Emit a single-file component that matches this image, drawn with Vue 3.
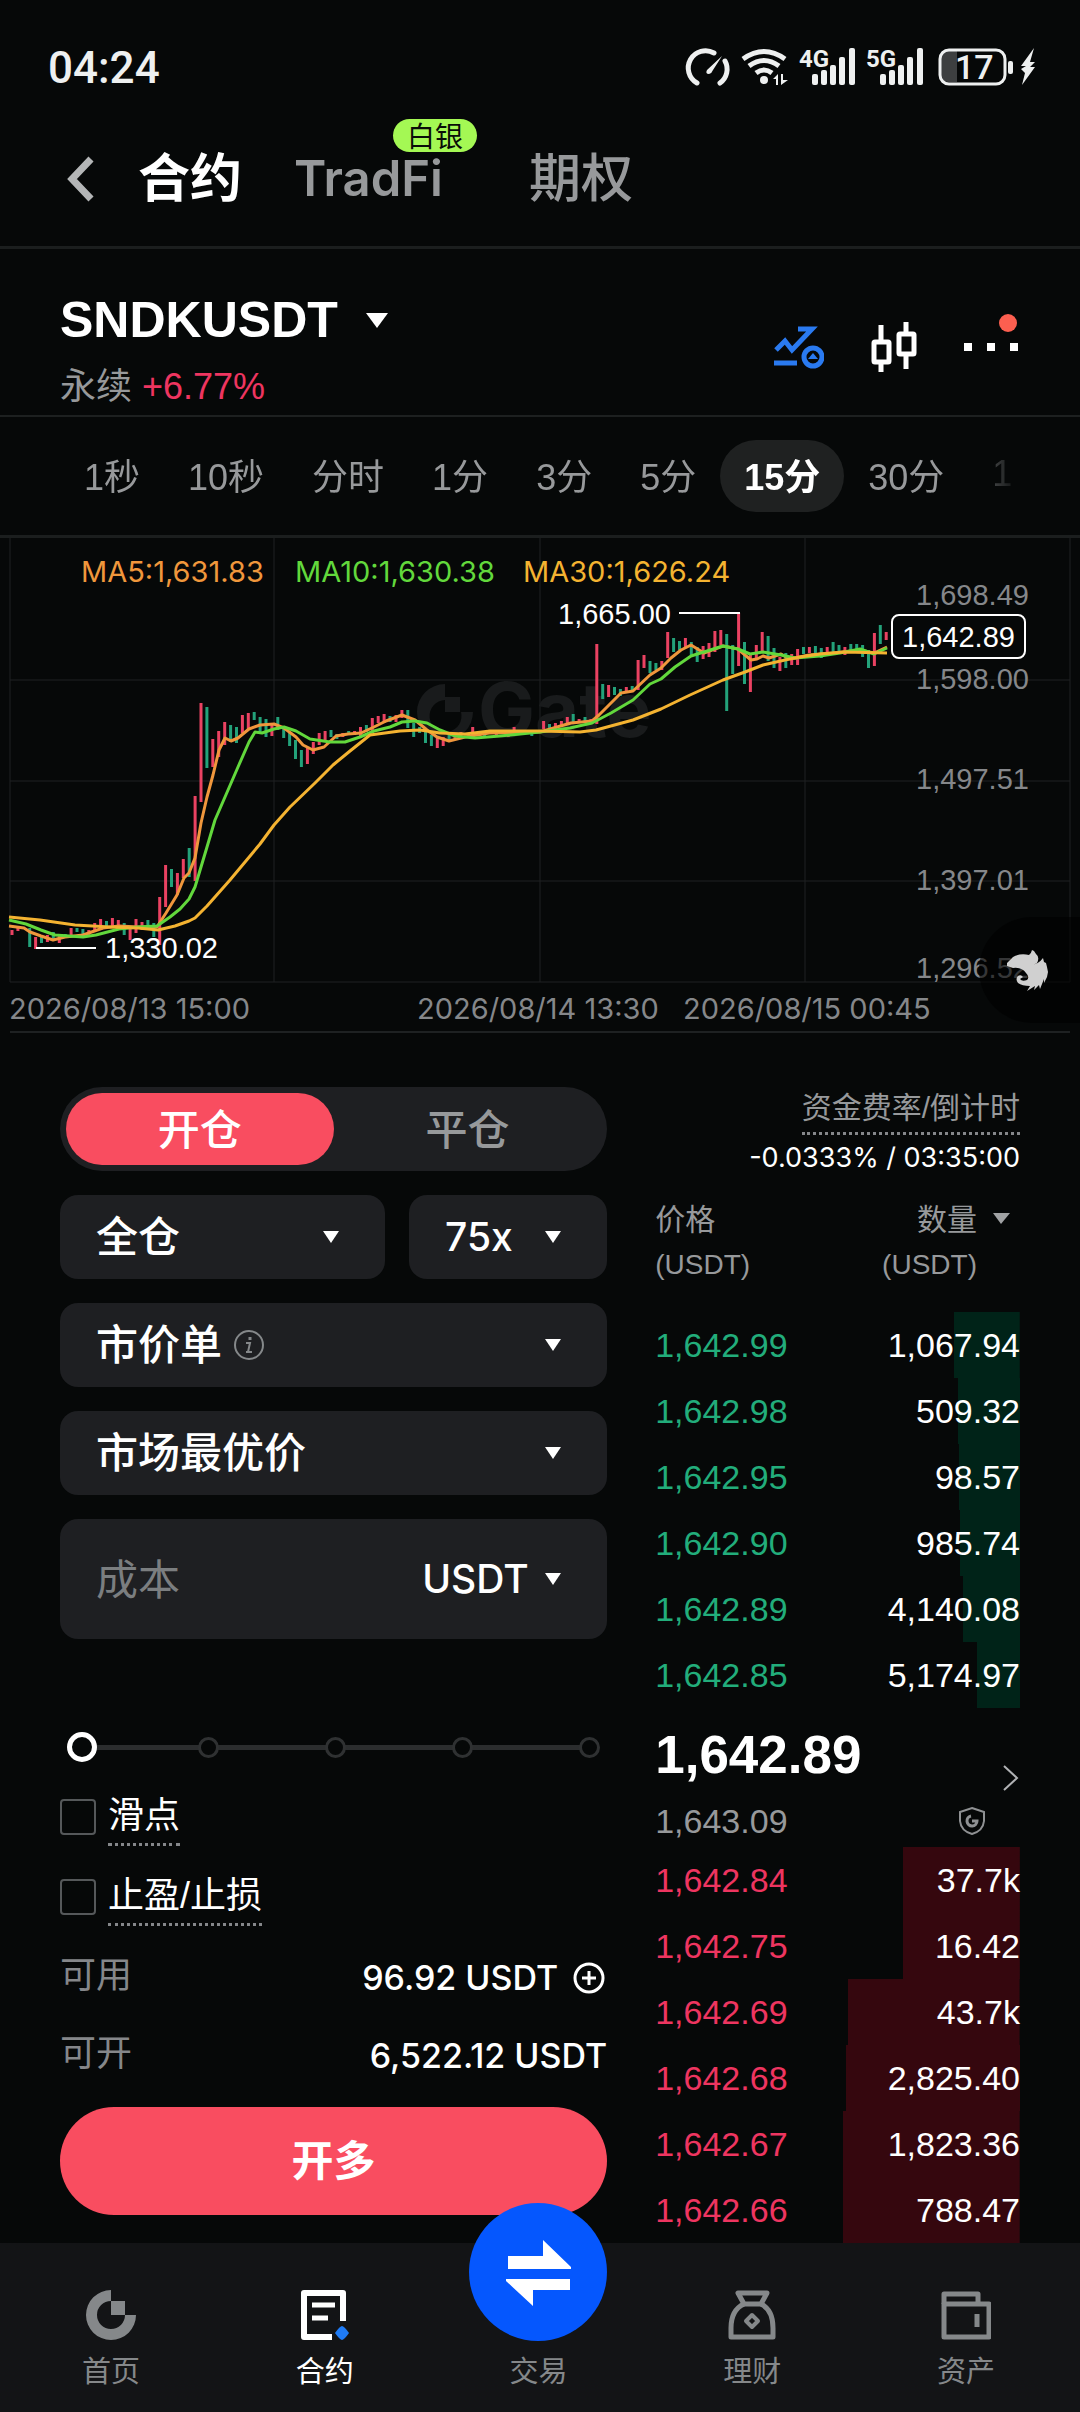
<script setup>
import { ref } from 'vue'

const periods = ['1秒', '10秒', '分时', '1分', '3分', '5分', '15分', '30分', '1']
const activePeriod = ref('15分')
const percent = ref(0)
const amount = ref('')

const gridX = [10, 274, 540, 805, 1070]
const gridY = [150, 251, 351, 452]

// [slot, high, low, up]
const candles = [
  [0, 400, 405, 1], [1, 397, 401, 1], [3, 398, 417, 0], [4, 407, 419, 1], [5, 405, 413, 0], [6, 405, 412, 1],
  [7, 402, 411, 0], [8, 404, 413, 1], [9, 404, 408, 0], [10, 398, 405, 1], [11, 398, 402, 0], [12, 399, 405, 0],
  [13, 400, 405, 1], [14, 393, 402, 1], [15, 389, 400, 1], [16, 391, 398, 0], [17, 388, 398, 1], [18, 390, 398, 1],
  [19, 393, 405, 0], [20, 397, 410, 1], [21, 389, 403, 1], [22, 392, 400, 1], [23, 390, 400, 0], [24, 393, 407, 0],
  [25, 367, 415, 1], [26, 335, 377, 1], [27, 339, 357, 0], [28, 343, 365, 1], [29, 329, 348, 1], [30, 318, 347, 0],
  [31, 266, 351, 1], [32, 173, 272, 1], [33, 177, 238, 0], [34, 209, 237, 1], [35, 201, 227, 1], [36, 192, 215, 1],
  [37, 195, 212, 0], [38, 197, 213, 0], [39, 185, 203, 1], [40, 183, 200, 1], [41, 182, 190, 0], [42, 187, 202, 0],
  [43, 189, 207, 0], [44, 195, 206, 1], [45, 187, 200, 0], [46, 197, 208, 0], [47, 202, 216, 0], [48, 210, 229, 0],
  [49, 220, 237, 0], [50, 218, 234, 1], [51, 212, 224, 1], [52, 203, 215, 1], [53, 201, 212, 1], [54, 200, 207, 0],
  [55, 204, 209, 0], [56, 203, 207, 1], [57, 201, 205, 0], [58, 201, 205, 1], [59, 197, 206, 1], [60, 195, 202, 0],
  [61, 188, 201, 1], [62, 186, 193, 1], [63, 184, 193, 1], [64, 186, 192, 0], [65, 185, 192, 1], [66, 180, 188, 1],
  [67, 180, 198, 0], [68, 193, 207, 0], [69, 197, 203, 0], [70, 200, 213, 0], [71, 205, 216, 0], [72, 207, 218, 1],
  [73, 207, 216, 1], [74, 203, 212, 0], [75, 203, 210, 1], [76, 202, 207, 1], [78, 197, 205, 1], [80, 202, 206, 0],
  [82, 201, 206, 1], [84, 202, 207, 1], [85, 197, 204, 1], [88, 200, 206, 0], [90, 191, 199, 1], [91, 194, 200, 0],
  [92, 193, 199, 1], [93, 191, 197, 1], [94, 187, 195, 1], [95, 184, 193, 0], [96, 189, 193, 1], [97, 187, 193, 0],
  [98, 189, 193, 1], [99, 114, 194, 1], [100, 154, 169, 0], [101, 155, 167, 1], [102, 157, 165, 0], [103, 159, 166, 0],
  [104, 157, 163, 1], [105, 156, 162, 0], [106, 130, 160, 1], [107, 125, 138, 1], [108, 131, 143, 0], [109, 133, 140, 0],
  [110, 131, 140, 1], [111, 102, 128, 1], [112, 108, 122, 0], [113, 111, 120, 0], [114, 108, 118, 1], [115, 112, 125, 0],
  [116, 117, 132, 0], [117, 116, 129, 1], [118, 113, 127, 1], [119, 101, 122, 1], [120, 100, 115, 1], [121, 104, 181, 0],
  [122, 115, 144, 0], [123, 83, 136, 1], [124, 112, 154, 0], [125, 125, 162, 1], [126, 115, 130, 1], [127, 102, 122, 1],
  [128, 106, 131, 0], [129, 118, 138, 0], [130, 127, 141, 1], [131, 123, 138, 0], [132, 124, 135, 1], [133, 119, 135, 1],
  [134, 117, 124, 0], [135, 117, 123, 1], [136, 116, 123, 0], [137, 118, 128, 0], [138, 117, 123, 1], [139, 112, 122, 0],
  [140, 115, 123, 0], [141, 117, 125, 1], [142, 114, 122, 0], [143, 114, 123, 0], [144, 115, 127, 0], [145, 120, 138, 0],
  [146, 103, 136, 1], [147, 95, 114, 0], [148, 102, 110, 1],
]
const slotX = (slot) => Math.round((12 + slot * 5.907) * 10) / 10

const ma5 = '9,396 24,398 30,402 41,406 53,410 65,407 83,405 103,398 119,396 138,397 157,397 166,383 177,365 184,348 189,343 195,328 201,293 207,267 213,245 219,220 225,208 231,211 238,208 249,199 260,195 274,194 284,198 296,207 303,215 313,220 324,217 336,206 348,204 361,203 374,197 386,191 402,185 415,190 427,200 437,207 449,211 465,207 489,203 540,202 557,197 571,193 592,191 599,185 611,173 621,163 633,161 650,145 661,138 671,128 681,120 691,115 704,123 712,120 723,116 738,119 745,125 751,130 757,129 763,126 769,128 781,124 786,127 795,128 809,125 833,123 860,120 874,123 887,117'
const ma10 = '9,390 26,394 41,400 55,405 83,407 96,405 119,399 138,397 157,396 170,387 180,379 189,369 195,357 201,337 207,317 215,290 225,267 238,237 249,212 255,202 262,203 274,199 284,197 296,201 310,209 330,212 345,212 360,207 374,201 390,197 402,192 415,191 427,193 440,200 455,206 475,208 500,206 540,202 570,198 592,193 611,183 633,170 650,154 661,149 675,137 691,126 707,121 723,116 738,119 750,124 763,122 781,125 795,128 820,126 840,123 860,119 874,124 887,118'
const ma30 = '9,387 40,390 75,395 110,397 138,398 158,400 175,396 189,391 195,388 207,376 230,350 260,314 274,295 290,277 315,253 333,235 350,221 370,205 400,201 420,200 440,203 465,204 490,201 540,201 580,202 596,200 633,190 661,179 690,165 723,150 745,142 763,135 785,130 800,127 820,124 845,122 887,123'

const axis = [
  ['1,698.49', 75], ['1,598.00', 159], ['1,497.51', 259], ['1,397.01', 360], ['1,296.52', 448],
]

// [price, size, depth in percent of the row]
const upper = [
  ['1,642.99', '1,067.94', 18], ['1,642.98', '509.32', 17], ['1,642.95', '98.57', 16.8],
  ['1,642.90', '985.74', 16.5], ['1,642.89', '4,140.08', 15.7], ['1,642.85', '5,174.97', 11.8],
]
const lower = [
  ['1,642.84', '37.7k', 32], ['1,642.75', '16.42', 32], ['1,642.69', '43.7k', 47],
  ['1,642.68', '2,825.40', 47.8], ['1,642.67', '1,823.36', 48.4], ['1,642.66', '788.47', 48.4],
]
</script>

<template>
  <div class="page">
    <div class="status">
      <span class="clock">04:24</span>
      <svg class="status-icons" viewBox="0 0 352 40" role="img" aria-label="网络与电量">
        <g fill="none" stroke="#eef0f0" stroke-width="5" stroke-linecap="round">
          <path d="M9 35A17 17 0 0 1 26 5" />
          <path d="M37 13A17 17 0 0 1 32 35" />
        </g>
        <path d="M34 8L19 22Q17 26 21 26Q24 25 25 22Z" fill="#eef0f0" />
        <g fill="none" stroke="#eef0f0" stroke-width="5">
          <path d="M55 11Q76 -4 97 11" />
          <path d="M61 18Q76 7 91 18" />
          <path d="M68 25Q76 19 84 25" />
        </g>
        <circle cx="76" cy="32" r="4" fill="#eef0f0" />
        <path d="M85 31L90 26V37H88V31ZM93 26H95V32H100L93 37Z" fill="#eef0f0" />
        <text x="111" y="19" class="net">4G</text>
        <g fill="#eef0f0">
          <rect x="124" y="26" width="6" height="11" rx="2" /><rect x="133" y="22" width="6" height="15" rx="2" />
          <rect x="142" y="17" width="6" height="20" rx="2" /><rect x="151" y="9" width="6" height="28" rx="2" />
          <rect x="161" y="0" width="6" height="37" rx="2" />
        </g>
        <text x="178" y="19" class="net">5G</text>
        <g fill="#eef0f0">
          <rect x="192" y="26" width="6" height="11" rx="2" /><rect x="201" y="22" width="6" height="15" rx="2" />
          <rect x="210" y="17" width="6" height="20" rx="2" /><rect x="219" y="9" width="6" height="28" rx="2" />
          <rect x="229" y="0" width="6" height="37" rx="2" />
        </g>
        <path d="M260 3H269V34H260Q253 34 253 27V10Q253 3 260 3Z" fill="#3d3f40" />
        <rect x="252" y="2" width="65" height="34" rx="9" fill="none" stroke="#eef0f0" stroke-width="3" />
        <rect x="320" y="13" width="5" height="13" rx="2" fill="#eef0f0" />
        <text x="267" y="31" class="charge">17</text>
        <path d="M346 0L333 18H338L333 21L337 25L334 37L347 19H342L347 14H342Z" fill="#eef0f0" />
      </svg>
    </div>

    <header class="tabs">
      <button class="back" aria-label="返回">
        <svg width="28" height="46" viewBox="0 0 28 46"><path d="M25 3L6 23L25 43" fill="none" stroke="#b4b6b7" stroke-width="7" /></svg>
      </button>
      <a href="#" class="tab on">合约</a>
      <a href="#" class="tab trad">TradFi<span class="badge">白银</span></a>
      <a href="#" class="tab">期权</a>
    </header>

    <section class="symbol">
      <div>
        <h1><button class="pair">SNDKUSDT<svg width="22" height="15" viewBox="0 0 22 15"><path d="M0 0H22L11 15Z" fill="#fff" /></svg></button></h1>
        <p class="sub">永续 <span class="up">+6.77%</span></p>
      </div>
      <div class="tools">
        <button aria-label="指标">
          <svg width="50" height="50" viewBox="0 0 50 50" fill="none" stroke="#2a7af0" stroke-width="4">
            <path d="M2 28L11 19L18 28L38 7H24" stroke-width="5" /><path d="M0 41H23" stroke-width="5" />
            <circle cx="39" cy="35" r="9" stroke-width="5" /><path d="M34 37L39 31L44 37Z" fill="#2a7af0" stroke="none" />
          </svg>
        </button>
        <button aria-label="K线">
          <svg width="46" height="50" viewBox="0 0 46 50" fill="none" stroke="#fff" stroke-width="5">
            <rect x="3" y="20" width="15" height="20" rx="1" /><rect x="28" y="12" width="15" height="20" rx="1" />
            <path d="M10 3V18M10 42V50M35 0V10M35 34V47" />
          </svg>
        </button>
        <button class="more" aria-label="更多">
          <svg width="56" height="50" viewBox="0 0 56 50" fill="#fff">
            <rect x="0" y="21" width="8" height="8" /><rect x="23" y="21" width="8" height="8" /><rect x="46" y="21" width="8" height="8" />
          </svg>
          <i class="dot"></i>
        </button>
      </div>
    </section>

    <nav class="periods">
      <div class="scroll">
        <button v-for="p in periods" :key="p" :class="{ on: p === activePeriod }" @click="activePeriod = p">{{ p }}</button>
      </div>
    </nav>

    <svg class="chart" viewBox="0 8 1080 496" role="img" aria-label="SNDKUSDT 15分 K线">
      <g stroke="#1e2122" stroke-width="1">
        <line v-for="x in gridX" :key="'x' + x" :x1="x" :x2="x" y1="8" y2="452" />
        <line v-for="y in gridY" :key="'y' + y" x1="10" x2="1070" :y1="y" :y2="y" />
        <line x1="10" x2="1070" y1="502" y2="502" stroke-width="2" />
      </g>
      <g fill="#191b1c">
        <path d="M445 154A28 28 0 1 0 473 182H461A16 16 0 1 1 445 170Z" /><rect x="445" y="167" width="15" height="15" />
        <text x="478" y="207" class="mark">Gate</text>
      </g>
      <g class="label axis">
        <text v-for="a in axis" :key="a[0]" x="916" :y="a[1]">{{ a[0] }}</text>
      </g>
      <rect
        v-for="c in candles" :key="c[0]" :x="slotX(c[0]) - 1.5" :y="c[1]" width="3" :height="c[2] - c[1]"
        :fill="c[3] ? '#ea4262' : '#23a27a'"
      />
      <g fill="none" stroke-width="3" stroke-linejoin="round">
        <polyline :points="ma5" stroke="#f0973c" />
        <polyline :points="ma10" stroke="#62d83c" />
        <polyline :points="ma30" stroke="#f4b331" />
      </g>
      <g class="label">
        <text x="81" y="52" fill="#f0973c">MA5:1,631.83</text>
        <text x="295" y="52" fill="#62d83c">MA10:1,630.38</text>
        <text x="523" y="52" fill="#f4b331">MA30:1,626.24</text>
      </g>
      <path d="M679 83H740M36 418H96" stroke="#fff" stroke-width="2" />
      <g class="label point">
        <text x="558" y="94">1,665.00</text>
        <text x="105" y="428">1,330.02</text>
      </g>
      <rect x="892" y="85" width="133" height="43" rx="7" fill="#060808" stroke="#fff" stroke-width="2" />
      <text x="902" y="117" class="label point">1,642.89</text>
      <g class="label date">
        <text x="9" y="489">2026/08/13 15:00</text>
        <text x="417" y="489">2026/08/14 13:30</text>
        <text x="683" y="489">2026/08/15 00:45</text>
      </g>
      <path d="M1080 387H1032A53 53 0 0 0 1032 493H1080Z" fill="#000" fill-opacity="0.6" />
      <g transform="translate(980 400)" fill="#d0d0d0">
        <path d="M27 33L33 27Q40 23 49 25Q51 24 52 20L54 21L56 24Q60 27 57 33Q54 35 50 35Q58 35 63 28L64 32L66 33L67 37L68 42L67 47L64 53V49L60 59L59 55L54 60L55 56L47 61L50 56Q42 56 38 53Q35 49 38 46Q41 44 43 47L40 49Q42 52 47 50Q50 47 46 43Q42 37 33 38L27 36Z" />
      </g>
    </svg>

    <main class="trade">
      <form class="order" @submit.prevent>
        <div class="segment">
          <button type="button" class="on">开仓</button>
          <button type="button">平仓</button>
        </div>
        <div class="pairs">
          <div class="field">
            <select aria-label="保证金模式"><option>全仓</option></select>
            <svg class="caret" viewBox="0 0 16 12"><path d="M0 0H16L8 12Z" /></svg>
          </div>
          <div class="field latin">
            <select aria-label="杠杆"><option>75x</option></select>
            <svg class="caret" viewBox="0 0 16 12"><path d="M0 0H16L8 12Z" /></svg>
          </div>
        </div>
        <div class="field">
          <select aria-label="订单类型"><option>市价单</option></select>
          <button type="button" class="info" aria-label="说明">
            <svg width="30" height="30" viewBox="0 0 30 30" fill="none" stroke="#85888a" stroke-width="2">
              <circle cx="15" cy="15" r="14" /><path d="M12 13H16L14 22H18M12 22H14" /><path d="M16 7V10" stroke-width="3" />
            </svg>
          </button>
          <svg class="caret" viewBox="0 0 16 12"><path d="M0 0H16L8 12Z" /></svg>
        </div>
        <div class="field">
          <select aria-label="价格类型"><option>市场最优价</option></select>
          <svg class="caret" viewBox="0 0 16 12"><path d="M0 0H16L8 12Z" /></svg>
        </div>
        <div class="field cost">
          <input v-model="amount" type="text" placeholder="成本" aria-label="成本" />
          <select class="unit" aria-label="单位"><option>USDT</option></select>
          <svg class="caret" viewBox="0 0 16 12"><path d="M0 0H16L8 12Z" /></svg>
        </div>

        <div class="slider">
          <div class="stops"><i></i><i></i><i></i><i></i></div>
          <input v-model="percent" type="range" min="0" max="100" aria-label="仓位比例" />
        </div>

        <div class="checks">
          <div class="check"><input id="slip" type="checkbox" /><label for="slip">滑点</label></div>
          <div class="check"><input id="tpsl" type="checkbox" /><label for="tpsl">止盈/止损</label></div>
        </div>

        <dl class="balances">
          <div>
            <dt>可用</dt>
            <dd>96.92 USDT
              <button type="button" aria-label="充值">
                <svg width="34" height="32" viewBox="0 0 34 32" fill="none" stroke="#fff" stroke-width="3">
                  <circle cx="16" cy="16" r="14" /><path d="M16 9V23M9 16H23" />
                </svg>
              </button>
            </dd>
          </div>
          <div><dt>可开</dt><dd>6,522.12 USDT</dd></div>
        </dl>
        <button type="submit" class="submit">开多</button>
      </form>

      <section class="book">
        <div class="funding">
          <span class="rate">资金费率/倒计时</span>
          <span class="rate-value">-0.0333% / 03:35:00</span>
        </div>
        <table>
          <thead>
            <tr>
              <th>价格<br /><small>(USDT)</small></th>
              <th>
                <button>
                  <span>数量<br /><small>(USDT)</small></span>
                  <svg width="17" height="44" viewBox="0 0 17 44"><path d="M0 15H17L8 26Z" fill="#a0a2a4" /></svg>
                </button>
              </th>
            </tr>
          </thead>
          <tbody class="green">
            <tr v-for="r in upper" :key="r[0]" :style="{ backgroundSize: r[2] + '% 100%' }"><td>{{ r[0] }}</td><td>{{ r[1] }}</td></tr>
          </tbody>
        </table>
        <a href="#" class="last">
          <strong>1,642.89</strong>
          <span class="mark-price">1,643.09
            <svg width="28" height="30" viewBox="0 0 28 30" fill="none" stroke="#8f9193" stroke-width="2">
              <path d="M14 2L26 6V15Q25 25 14 28Q3 25 2 15V6Z" />
              <path d="M13 10A5 5 0 1 0 19 15H14" stroke-width="3" />
            </svg>
          </span>
          <svg class="go" width="18" height="28" viewBox="0 0 18 28"><path d="M2 2L15 14L2 26" fill="none" stroke="#b0b2b4" stroke-width="2" /></svg>
        </a>
        <table>
          <tbody class="red">
            <tr v-for="r in lower" :key="r[0]" :style="{ backgroundSize: r[2] + '% 100%' }"><td>{{ r[0] }}</td><td>{{ r[1] }}</td></tr>
          </tbody>
        </table>
      </section>
    </main>

    <nav class="bottom">
      <a href="#">
        <svg viewBox="0 0 50 50" fill="#85888a"><path d="M25 0A25 25 0 1 0 50 25H39A14 14 0 1 1 25 11Z" /><rect x="25" y="11" width="14" height="14" /></svg>
        首页
      </a>
      <a href="#" class="on">
        <svg viewBox="0 0 50 50" fill="none" stroke="#fff" stroke-width="6">
          <path d="M43 31V3H4V47H32" stroke-linejoin="round" /><path d="M12 15H35M12 28H28" stroke-width="5" />
          <path d="M42 36Q44 36 49 43Q44 50 42 50Q40 50 35 43Q40 36 42 36Z" fill="#1f7bf5" stroke="none" />
        </svg>
        合约
      </a>
      <a href="#">
        <span class="swap">
          <svg viewBox="0 0 138 138" fill="#fff">
            <path d="M39 53H74V37L102 64V66H39Z" /><path d="M101 76V87H64V103L37 78V76Z" />
          </svg>
        </span>
        <span class="spacer"></span>
        交易
      </a>
      <a href="#">
        <svg viewBox="0 0 50 50" fill="none" stroke="#85888a" stroke-width="5" stroke-linejoin="round">
          <path d="M11 3H40L34 14H17Z" /><path d="M17 14Q4 20 4 38V47H46V38Q46 20 34 14" />
          <path d="M25 25L31 31L25 37L19 31Z" stroke-width="4" />
        </svg>
        理财
      </a>
      <a href="#">
        <svg viewBox="0 0 50 50" fill="none" stroke="#85888a" stroke-width="5" stroke-linejoin="round">
          <path d="M3 14V4H37V14" /><rect x="3" y="14" width="45" height="33" /><path d="M36 24V37" />
        </svg>
        资产
      </a>
    </nav>
  </div>
</template>

<style>
body {
  background: #060808;
}
</style>

<style scoped>
* {
  box-sizing: border-box;
}

.page {
  background: #060808;
  color: #fff;
  font-family: "Liberation Sans", "Noto Sans CJK SC", sans-serif;
}

h1, p, dl, dd {
  margin: 0;
}

a {
  color: inherit;
  text-decoration: none;
}

svg {
  display: block;
  flex: none;
}

button, select, input {
  margin: 0;
  padding: 0;
  border: 0;
  background: none;
  color: inherit;
  font: inherit;
}

.status {
  display: flex;
  align-items: center;
  justify-content: space-between;
  height: 112px;
  padding: 24px 40px 0 48px;
}

.clock {
  font: 500 44px/52px Roboto, sans-serif;
  color: #eef0f0;
}

.status-icons {
  width: 352px;
  height: 40px;
  overflow: visible;
}

.net {
  font: 700 24px Roboto, sans-serif;
  fill: #eef0f0;
}

.charge {
  font: 500 34px Roboto, sans-serif;
  fill: #eef0f0;
}

.tabs {
  display: flex;
  align-items: center;
  height: 137px;
  padding: 0 66px;
  border-bottom: 3px solid #1b1e1e;
}

.back {
  margin-right: 44px;
}

.tab {
  position: relative;
  margin-right: 52px;
  font: 500 52px/76px "Liberation Sans", "Noto Sans CJK SC", sans-serif;
  color: #97999b;
}

.tab.on {
  color: #fff;
  font-weight: 700;
}

.tab.trad {
  padding-right: 34px;
  font: 600 49px/76px Inter, sans-serif;
}

.badge {
  position: absolute;
  right: 0;
  top: -22px;
  padding: 0 14px;
  border-radius: 17px;
  background: #a4f854;
  color: #0a0d08;
  font: 400 28px/33px "Noto Sans CJK SC", sans-serif;
}

.symbol {
  display: flex;
  justify-content: space-between;
  height: 168px;
  padding: 41px 60px 0;
  border-bottom: 2px solid #1d2020;
}

.pair {
  display: flex;
  align-items: center;
  gap: 28px;
  font: 700 50px/60px "Liberation Sans", sans-serif;
}

.sub {
  margin-top: 15px;
  font-size: 36px;
  line-height: 44px;
  color: #97999b;
}

.up {
  color: #ee3560;
}

.tools {
  display: flex;
  gap: 47px;
  align-items: flex-start;
  padding-top: 32px;
}

.more {
  position: relative;
}

.dot {
  position: absolute;
  right: 3px;
  top: -8px;
  width: 18px;
  height: 18px;
  border-radius: 9px;
  background: #fc5f50;
}

.periods {
  height: 121px;
  padding: 23px 60px 0;
  border-bottom: 3px solid #1b1e1e;
}

.scroll {
  display: flex;
  overflow: hidden;
  mask-image: linear-gradient(to right, #000 93%, transparent);
}

.scroll button {
  flex: none;
  height: 72px;
  padding: 0 24px 5px;
  border-radius: 36px;
  font-size: 36px;
  color: #97999b;
}

.scroll .on {
  background: #1f2121;
  color: #fff;
  font-weight: 700;
}

.chart {
  width: 100%;
  height: auto;
}

.label {
  font: 400 29px Inter, sans-serif;
}

.label.axis,
.label.point {
  font: 400 29px "Liberation Sans", sans-serif;
  fill: #85878a;
}

.label.point {
  fill: #fff;
}

.label.date {
  fill: #85878a;
}

.mark {
  font: 700 76px Inter, sans-serif;
}

.trade {
  display: grid;
  grid-template-columns: 3fr 2fr;
  gap: 48px;
  padding: 53px 60px 0;
}

.order {
  display: flex;
  flex-direction: column;
  gap: 24px;
  min-width: 0;
  padding-bottom: 27px;
}

.segment {
  display: flex;
  padding: 6px;
  border-radius: 42px;
  background: #1e1f22;
}

.segment button {
  flex: 1;
  height: 72px;
  padding-bottom: 6px;
  border-radius: 36px;
  font: 500 42px "Noto Sans CJK SC", sans-serif;
  color: #97999b;
}

.segment .on {
  background: #f94d60;
  color: #fff;
}

.pairs {
  display: grid;
  grid-template-columns: 325fr 198fr;
  gap: 24px;
}

.field {
  position: relative;
  display: flex;
  align-items: center;
  height: 84px;
  border-radius: 18px;
  background: #1e1f22;
  font: 500 42px/60px Inter, "Noto Sans CJK SC", sans-serif;
}

.field.latin,
.field .unit {
  font-size: 39px;
}

.field select {
  flex: 1;
  min-width: 0;
  height: 100%;
  padding: 0 36px;
  appearance: none;
  font-family: inherit;
  font-weight: inherit;
}

.caret {
  position: absolute;
  right: 46px;
  width: 16px;
  height: 12px;
  fill: #fff;
  pointer-events: none;
}

.info {
  position: absolute;
  left: 174px;
}

.field.cost {
  height: 120px;
}

.cost input {
  flex: 1;
  min-width: 0;
  height: 100%;
  padding-left: 36px;
}

.cost input::placeholder {
  color: #7b7e80;
  opacity: 1;
  font-weight: 400;
}

.cost .unit {
  flex: none;
  padding: 0 78px 0 0;
}

.slider {
  position: relative;
  height: 60px;
  margin: 54px 7px 0;
}

.slider input {
  position: absolute;
  inset: 0;
  width: 100%;
  appearance: none;
}

.slider input::-webkit-slider-thumb {
  appearance: none;
  width: 30px;
  height: 30px;
  border: 5px solid #fff;
  border-radius: 15px;
  background: #060808;
}

.stops {
  display: flex;
  align-items: center;
  justify-content: space-between;
  height: 60px;
  padding-left: 131px;
  background: linear-gradient(#2b2d2e, #2b2d2e) center / calc(100% - 20px) 5px no-repeat;
}

.stops i {
  width: 21px;
  height: 21px;
  border: 3px solid #2f3132;
  border-radius: 11px;
  background: #060808;
}

.checks {
  display: flex;
  flex-direction: column;
  gap: 24px;
  margin-top: -12px;
}

.check {
  display: flex;
  align-items: center;
  gap: 12px;
  height: 56px;
}

.check input {
  width: 36px;
  height: 36px;
  appearance: none;
  border: 2px solid #55585a;
  border-radius: 4px;
}

.check label {
  border-bottom: 3px dotted #85878a;
  font-size: 36px;
  line-height: 54px;
}

.balances {
  display: flex;
  flex-direction: column;
  gap: 34px;
  margin: 7px 0 5px;
}

.balances div,
.balances dd {
  display: flex;
  align-items: center;
  justify-content: space-between;
  height: 44px;
}

.balances dt {
  padding-bottom: 4px;
  font-size: 36px;
  line-height: 40px;
  color: #85878a;
}

.balances dd {
  gap: 15px;
  font: 500 34px/44px Inter, sans-serif;
}

.submit {
  height: 108px;
  padding-bottom: 8px;
  border-radius: 54px;
  background: #f94d60;
  font: 700 42px "Noto Sans CJK SC", sans-serif;
}

.book {
  min-width: 0;
  padding-top: 3px;
}

.funding {
  display: flex;
  flex-direction: column;
  align-items: flex-end;
  gap: 5px;
  font-size: 30px;
  line-height: 36px;
}

.rate {
  padding-bottom: 6px;
  border-bottom: 3px dotted #85878a;
  color: #97999b;
}

.rate-value {
  font: 400 27px/36px Inter, sans-serif;
}

table {
  width: 100%;
  border-collapse: collapse;
}

thead th {
  height: 135px;
  padding: 22px 0 25px;
  font: 400 30px/44px "Liberation Sans", "Noto Sans CJK SC", sans-serif;
  color: #97999b;
  text-align: left;
}

small {
  font-size: 28px;
}

th button {
  display: flex;
  gap: 16px;
  margin: 0 10px 0 auto;
  text-align: right;
}

tbody tr {
  height: 66px;
  font-size: 34px;
  background-position: right;
  background-repeat: no-repeat;
}

td {
  padding: 0;
}

td:last-child {
  text-align: right;
}

.green tr {
  background-image: linear-gradient(#002318, #002318);
}

.green td:first-child {
  color: #22ad7b;
}

.red tr {
  background-image: linear-gradient(#35070e, #35070e);
}

.red td:first-child {
  color: #ee3560;
}

.last {
  display: grid;
  grid-template-columns: 1fr auto;
  column-gap: 16px;
  row-gap: 16px;
  align-items: center;
  padding: 17px 0 6px;
}

.last strong {
  grid-column: 1;
  font: 700 53px/60px "Liberation Sans", sans-serif;
}

.mark-price {
  grid-column: 1;
  display: flex;
  align-items: center;
  justify-content: space-between;
  font-size: 34px;
  line-height: 40px;
  color: #97999b;
}

.go {
  grid-column: 2;
  grid-row: 1 / 3;
  margin-bottom: 10px;
}

.bottom {
  display: flex;
  height: 170px;
  padding: 47px 7px 0 4px;
  background: #131416;
}

.bottom a {
  position: relative;
  flex: 1;
  display: flex;
  flex-direction: column;
  align-items: center;
  gap: 14px;
  font-size: 29px;
  line-height: 36px;
  color: #85888a;
}

.bottom a.on {
  color: #fff;
}

.bottom a > svg,
.spacer {
  width: 50px;
  height: 50px;
}

.swap {
  position: absolute;
  top: -87px;
  width: 138px;
  height: 138px;
  border-radius: 69px;
  background: #0557fe;
}
</style>
